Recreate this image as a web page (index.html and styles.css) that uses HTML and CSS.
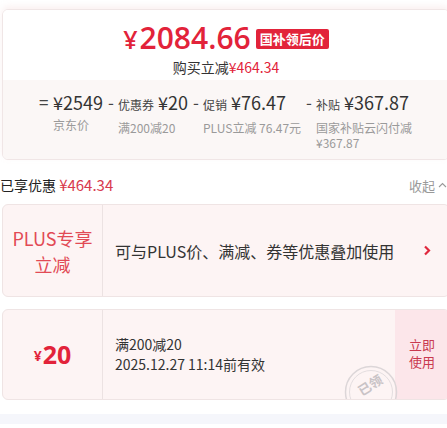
FILE: index.html
```html
<!DOCTYPE html>
<html lang="zh-CN">
<head>
<meta charset="utf-8">
<link rel="stylesheet" href="styles.css">
</head>
<body>
<div class="wrap">
  <section class="summary">
    <div class="price-block">
      <div class="price-row">
        <span class="price"><span class="yen">¥</span>2084.66</span>
        <span class="badge">国补领后价</span>
      </div>
      <div class="sub">购买立减<span class="red">¥464.34</span></div>
    </div>
    <div class="breakdown">
      <div class="col">
        <span class="sign">=</span>
        <div class="col-body">
          <div class="amt">¥2549</div>
          <div class="lbl">京东价</div>
        </div>
      </div>
      <div class="col">
        <span class="sign">-</span>
        <div class="col-body">
          <div class="amt"><span class="small">优惠券</span> ¥20</div>
          <div class="lbl">满200减20</div>
        </div>
      </div>
      <div class="col">
        <span class="sign">-</span>
        <div class="col-body">
          <div class="amt"><span class="small">促销</span> ¥76.47</div>
          <div class="lbl">PLUS立减 76.47元</div>
        </div>
      </div>
      <div class="col">
        <span class="sign">-</span>
        <div class="col-body">
          <div class="amt"><span class="small">补贴</span> ¥367.87</div>
          <div class="lbl">国家补贴云闪付减<br>¥367.87</div>
        </div>
      </div>
    </div>
  </section>

  <div class="saved">
    <div class="saved-left">已享优惠 <span class="red2">¥464.34</span></div>
    <div class="collapse">收起
      <svg width="9" height="6" viewBox="0 0 9 6"><polyline points="1,5 4.5,1.5 8,5" fill="none" stroke="#999" stroke-width="1.1"/></svg>
    </div>
  </div>

  <div class="card card-plus">
    <div class="card-left plus-title">PLUS专享<br>立减</div>
    <div class="card-mid plus-desc">可与PLUS价、满减、券等优惠叠加使用</div>
    <div class="card-arrow">
      <svg width="8" height="11" viewBox="0 0 8 11"><polyline points="2,1.5 6,5.5 2,9.5" fill="none" stroke="#e0283d" stroke-width="2.2"/></svg>
    </div>
  </div>

  <div class="card card-coupon">
    <div class="card-left coupon-val"><span class="cyen">¥</span>20</div>
    <div class="card-mid coupon-info">
      <div>满200减20</div>
      <div>2025.12.27 11:14前有效</div>
    </div>
    <div class="use">立即<br>使用</div>
    <div class="stamp">
      <svg class="stamp-ring" width="54" height="34" viewBox="0 0 54 34">
        <circle cx="27" cy="27" r="25.5" fill="none" stroke="#dcd6d8" stroke-width="1.5"/>
        <circle cx="27" cy="27" r="21.5" fill="none" stroke="#e3dddf" stroke-width="1"/>
      </svg>
      <span class="stamp-text">已领</span>
    </div>
  </div>

  <div class="band"></div>
</div>
</body>
</html>
```
FILE: styles.css
```css
* { box-sizing: border-box; }
html, body { margin: 0; padding: 0; background: #fff; overflow: hidden; }
body {
  font-family: "Noto Sans CJK SC", "Noto Sans", sans-serif;
  color: #333;
  width: 447px;
  height: 428px;
}
.wrap {
  padding-top: 9px;
  margin-left: 2px;
  margin-right: -3px;
}
.summary {
  border: 1px solid #f0e6e6;
  border-radius: 6px;
  overflow: hidden;
  box-shadow: 0 -3px 6px rgba(240, 200, 200, 0.25);
}
.price-block {
  background: #fff;
  height: 70px;
  padding-top: 11px;
  display: flex;
  flex-direction: column;
  align-items: center;
}
.price-row {
  display: flex;
  align-items: center;
  gap: 5px;
  height: 34px;
}
.price {
  font-family: "Open Sans", "Noto Sans", sans-serif;
  font-weight: 600;
  font-size: 30px;
  line-height: 34px;
  color: #e2233a;
  letter-spacing: 0;
}
.yen { font-size: 25px; margin-right: 2px; }
.badge {
  background: #e2233a;
  color: #fff;
  font-size: 13px;
  font-weight: 700;
  line-height: 20px;
  height: 20px;
  padding: 0 4px;
  border-radius: 2px;
  margin-top: 1px;
}
.sub {
  margin-top: 3px;
  font-size: 14px;
  line-height: 18px;
  color: #333;
}
.red { color: #e2233a; }
.breakdown {
  background: #fbf7f6;
  padding: 11px 0 9px 36px;
  display: grid;
  grid-template-columns: 69px 85px 113px 112px;
}
.col { display: flex; }
.sign {
  font-size: 17px;
  line-height: 22px;
  color: #444;
  width: 14px;
  flex: none;
}
.col:not(:first-child) .sign { width: 10px; }
.amt {
  font-size: 18px;
  line-height: 22px;
  color: #333;
  white-space: nowrap;
}
.small { font-size: 12px; color: #444; }
.lbl {
  margin-top: 4px;
  font-size: 12px;
  line-height: 15px;
  color: #9a9a9a;
}
.saved {
  margin-top: 15px;
  margin-left: -2px;
  margin-right: 3px;
  display: flex;
  justify-content: space-between;
  align-items: center;
  height: 20px;
}
.saved-left { font-size: 14px; line-height: 20px; color: #222; }
.red2 { color: #d83a4e; font-size: 15px; }
.collapse {
  font-size: 13px;
  color: #999;
  display: flex;
  align-items: center;
  gap: 3px;
}
.card {
  position: relative;
  display: flex;
  border: 1px solid #efe4e4;
  border-radius: 6px;
  background: #fdf4f4;
  overflow: hidden;
}
.card-plus { margin-top: 9px; height: 93px; }
.card-coupon { margin-top: 12px; height: 91px; }
.card-left {
  width: 100px;
  flex: none;
  border-right: 1px solid #ece2e2;
  display: flex;
  align-items: center;
  justify-content: center;
  text-align: center;
}
.plus-title {
  color: #e24a55;
  font-size: 18px;
  line-height: 26px;
}
.card-mid {
  flex: 1;
  padding-left: 12px;
  display: flex;
  flex-direction: column;
  justify-content: center;
}
.plus-desc { font-size: 16px; color: #333; }
.card-arrow {
  width: 28px;
  display: flex;
  align-items: center;
  padding-left: 2px;
}
.coupon-val {
  color: #e2233a;
  font-family: "Open Sans", "Noto Sans", sans-serif;
  font-weight: 700;
  font-size: 25px;
  line-height: 30px;
  padding-top: 29px;
  align-items: flex-start;
}
.cyen { font-size: 14px; margin-right: 1px; margin-top: 7px; line-height: 20px; }
.coupon-info { font-size: 14px; line-height: 20px; color: #333; padding-bottom: 2px; }
.use {
  width: 54px;
  flex: none;
  background: #fce6ea;
  color: #c93a50;
  font-size: 13px;
  line-height: 17px;
  display: flex;
  align-items: center;
  justify-content: center;
  text-align: center;
  padding-bottom: 4px;
}
.stamp {
  position: absolute;
  left: 341px;
  top: 55px;
  width: 54px;
  height: 34px;
}
.stamp-ring { display: block; }
.stamp-text {
  position: absolute;
  left: 13px;
  top: 12px;
  transform: rotate(-32deg);
  color: #c9c3c6;
  font-size: 13px;
  line-height: 16px;
  font-weight: 700;
}
.band {
  margin-top: 14px;
  margin-left: -2px;
  height: 10px;
  background: #f5f6fb;
}
```
